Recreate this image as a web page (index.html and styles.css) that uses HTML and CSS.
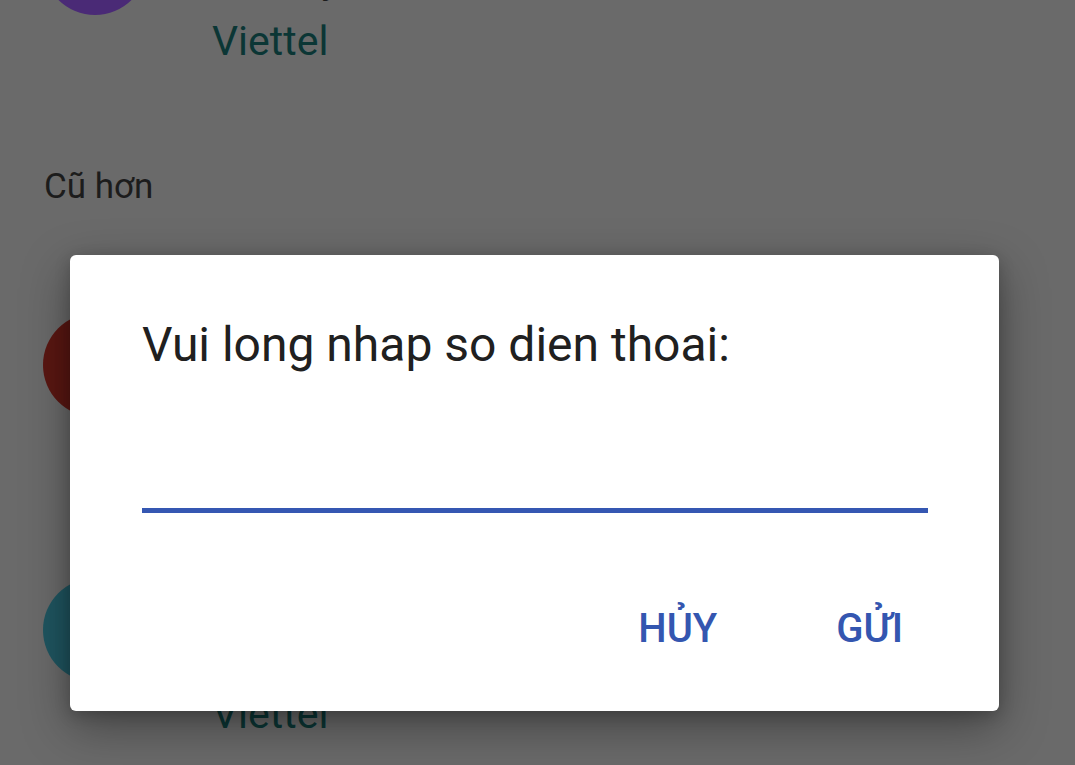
FILE: index.html
```html
<!DOCTYPE html>
<html lang="vi">
<head>
<meta charset="utf-8">
<title>Nhập số điện thoại</title>
<link rel="stylesheet" href="styles.css">
</head>
<body>
<div class="screen">
  <div class="list">
    <div class="item">
      <div class="avatar avatar-purple"></div>
      <div class="lines">
        <div class="name">Bé Huy</div>
        <div class="sub">Viettel</div>
      </div>
    </div>
    <div class="header">Cũ hơn</div>
    <div class="item">
      <div class="avatar avatar-red"></div>
      <div class="lines">
        <div class="name">Hoa</div>
        <div class="sub">Viettel</div>
      </div>
    </div>
    <div class="item item-next">
      <div class="avatar avatar-teal"></div>
      <div class="lines lines-low">
        <div class="name">Minh</div>
        <div class="sub">Viettel</div>
      </div>
    </div>
  </div>

  <div class="dialog">
    <div class="title">Vui long nhap so dien thoai:</div>
    <div class="field"></div>
    <div class="actions">
      <span class="btn">HỦY</span>
      <span class="btn">GỬI</span>
    </div>
  </div>
</div>
</body>
</html>
```

FILE: styles.css
```css
html, body {
  margin: 0;
  padding: 0;
  width: 1075px;
  height: 765px;
  overflow: hidden;
  background: #6a6a6a;
  font-family: Roboto, "Liberation Sans", sans-serif;
}

.screen {
  position: relative;
  width: 1075px;
  height: 765px;
  overflow: hidden;
}

.list {
  display: flex;
  flex-direction: column;
  margin-top: -89px;
}

.item {
  display: flex;
  align-items: flex-start;
  gap: 65px;
  padding-left: 43px;
  height: 200px;
}

.item-next {
  margin-top: 65px;
}

.avatar {
  width: 104px;
  height: 104px;
  border-radius: 50%;
  flex: none;
}

.avatar-purple { background: #4a2a76; }
.avatar-red { background: #5a1712; }
.avatar-teal { background: #1f5560; }

.lines {
  padding-top: 44px;
  font-size: 41px;
  line-height: 48px;
  color: #0b3635;
  white-space: nowrap;
}

.lines-low {
  padding-top: 50px;
}

.name {
  color: #1c1c1c;
  margin-bottom: 14px;
}

.header {
  padding: 56px 0 106px 44px;
  font-size: 35px;
  line-height: 40px;
  color: #1c1c1c;
}

.dialog {
  position: absolute;
  left: 70px;
  top: 255px;
  width: 929px;
  height: 456px;
  box-sizing: border-box;
  background: #ffffff;
  border-radius: 6px;
  padding: 62px 71px 0 72px;
  box-shadow: 0 16px 48px rgba(0, 0, 0, 0.36), 0 4px 16px rgba(0, 0, 0, 0.2);
  display: flex;
  flex-direction: column;
}

.title {
  font-size: 48px;
  line-height: 56px;
  color: #202020;
  white-space: nowrap;
}

.field {
  margin-top: 40px;
  height: 95px;
  border-bottom: 5px solid #3557b2;
}

.actions {
  margin-top: 92px;
  display: flex;
  justify-content: flex-end;
  gap: 119px;
  padding-right: 25px;
}

.btn {
  font-size: 40px;
  line-height: 48px;
  font-weight: 500;
  color: #3456b0;
}
```
